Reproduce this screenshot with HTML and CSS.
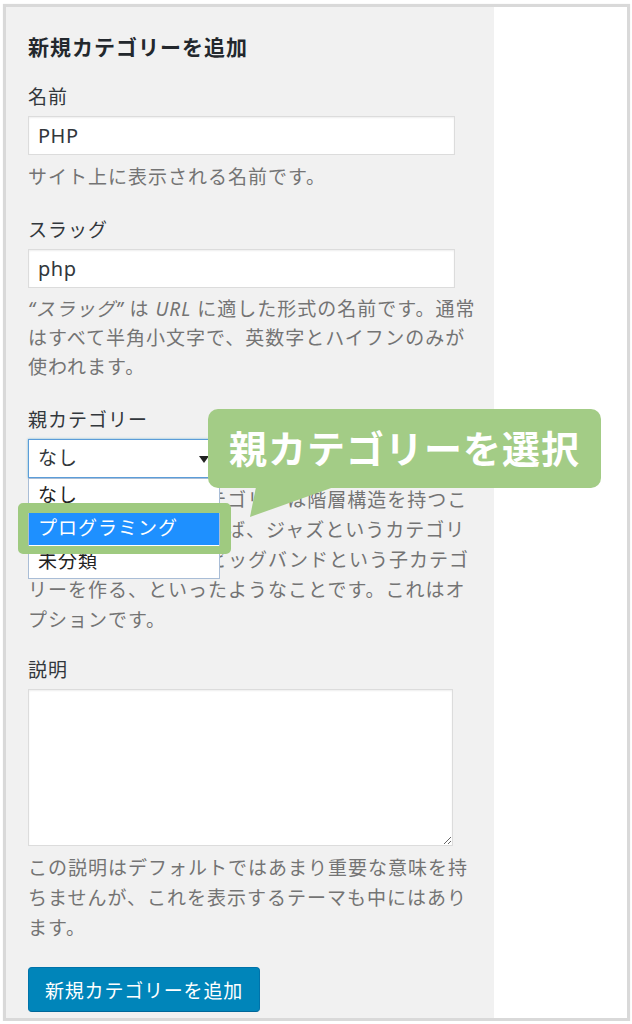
FILE: index.html
```html
<!DOCTYPE html>
<html lang="ja">
  <head>
    <meta charset="UTF-8" />
    <meta name="viewport" content="width=device-width, initial-scale=1.0" />
    <title>新規カテゴリーを追加</title>
    <link rel="stylesheet" href="styles.css">
  </head>
  <body>
    <div class="frame">
      <div class="form-wrap">
        <h2>新規カテゴリーを追加</h2>

        <div class="form-field">
          <label for="tag-name">名前</label>
          <input type="text" id="tag-name" value="PHP" />
          <p class="help">サイト上に表示される名前です。</p>
        </div>

        <div class="form-field">
          <label for="tag-slug">スラッグ</label>
          <input type="text" id="tag-slug" value="php" />
          <p class="help slug-help"><em>“スラッグ”</em> は <em>URL</em> に適した形式の名前です。通常<br>はすべて半角小文字で、英数字とハイフンのみが<br>使われます。</p>
        </div>

        <div class="form-field parent-field">
          <label>親カテゴリー</label>
          <div class="select">なし</div>
          <p class="help">タグとは異なり、カテゴリーは階層構造を持つこ<br>とができます。たとえば、ジャズというカテゴリ<br>ーの下にビバップやビッグバンドという子カテゴ<br>リーを作る、といったようなことです。これはオ<br>プションです。</p>

          <ul class="dropdown">
            <li>なし</li>
            <li class="active">プログラミング</li>
            <li>未分類</li>
          </ul>
          <div class="mark"></div>

          <div class="callout">
            親カテゴリーを選択
            <svg class="tail" width="90" height="32" viewBox="0 0 90 32">
              <polygon points="8,0 86,0 2,30" fill="#a3cc86" />
            </svg>
          </div>
        </div>

        <div class="form-field">
          <label for="tag-description">説明</label>
          <textarea id="tag-description"></textarea>
          <p class="help">この説明はデフォルトではあまり重要な意味を持<br>ちませんが、これを表示するテーマも中にはあり<br>ます。</p>
        </div>

        <button class="button-primary">新規カテゴリーを追加</button>
      </div>
      <div class="side"></div>
    </div>
  </body>
</html>
```

FILE: styles.css
```css
body {
  margin: 0;
  background: #fff;
  font-family: "Noto Sans", "Noto Sans CJK JP", sans-serif;
  font-size: 19px;
  letter-spacing: 1px;
  color: #32373c;
}
.frame {
  display: flex;
  margin: 4px 2px 0 3px;
  border: 3px solid #d9d9d9;
  box-shadow: 0 0 1px #e6e6e6;
}
.form-wrap {
  width: 466px;
  padding: 25px 0 6px 22px;
  background: #f1f1f1;
}
.side {
  flex: 1;
  background: #fff;
}
h2 {
  margin: 0 0 21px;
  font-size: 21px;
  line-height: 30px;
  font-weight: bold;
  letter-spacing: 1px;
  color: #23282d;
}
.form-field {
  margin-bottom: 24px;
}
.form-field label {
  display: block;
  line-height: 28px;
  margin-bottom: 5px;
  color: #32373c;
}
input[type="text"] {
  display: block;
  box-sizing: border-box;
  width: 427px;
  height: 39px;
  margin: 0;
  padding: 0 9px;
  border: 1px solid #dcdcdc;
  box-shadow: inset 0 1px 2px rgba(0, 0, 0, 0.07);
  background: #fff;
  font-family: inherit;
  font-size: 20px;
  letter-spacing: 0.5px;
  color: #32373c;
  outline: none;
}
textarea {
  display: block;
  box-sizing: border-box;
  width: 425px;
  height: 157px;
  margin: 0;
  border: 1px solid #dcdcdc;
  box-shadow: inset 0 1px 2px rgba(0, 0, 0, 0.07);
  background: #fff;
  outline: none;
}
.help {
  margin: 7px 0 0;
  line-height: 30px;
  color: #747474;
}
.slug-help {
  line-height: 29px;
}
.help em {
  font-style: italic;
}
.parent-field {
  position: relative;
  margin-bottom: 21px;
}
.select {
  position: relative;
  box-sizing: border-box;
  width: 192px;
  height: 39px;
  padding: 0 9px;
  line-height: 37px;
  border: 1px solid #5b9dd9;
  box-shadow: 0 0 2px rgba(30, 140, 190, 0.6);
  background: #fff;
  color: #32373c;
}
.select::after {
  content: "";
  position: absolute;
  right: 10px;
  top: 16px;
  border-left: 5px solid transparent;
  border-right: 5px solid transparent;
  border-top: 7px solid #222;
}
.dropdown {
  position: absolute;
  left: 0;
  top: 72px;
  width: 192px;
  box-sizing: border-box;
  margin: 0;
  padding: 0;
  list-style: none;
  border: 1px solid #a9bdd6;
  background: #fff;
}
.dropdown li {
  height: 33px;
  line-height: 33px;
  padding: 0 9px;
  color: #222;
}
.dropdown li.active {
  background: #1e90ff;
  color: #fff;
}
.mark {
  position: absolute;
  left: -10px;
  top: 97px;
  width: 213px;
  height: 51px;
  box-sizing: border-box;
  border-style: solid;
  border-color: #9fca80;
  border-width: 10px 11px 8px 10px;
  border-radius: 5px;
}
.callout {
  position: absolute;
  left: 180px;
  top: 3px;
  width: 393px;
  height: 79px;
  border-radius: 10px;
  background: #a3cc86;
  color: #fff;
  font-size: 38px;
  font-weight: bold;
  letter-spacing: 1px;
  line-height: 79px;
  text-align: center;
}
.callout .tail {
  position: absolute;
  left: 40px;
  top: 78px;
}
.button-primary {
  display: block;
  margin-top: 18px;
  width: 232px;
  height: 45px;
  padding: 0;
  border: 1px solid #0073aa;
  border-bottom-color: #006799;
  border-radius: 4px;
  background: #0085ba;
  color: #fff;
  font-family: inherit;
  font-size: 19px;
  letter-spacing: 0.8px;
  cursor: pointer;
}
```
